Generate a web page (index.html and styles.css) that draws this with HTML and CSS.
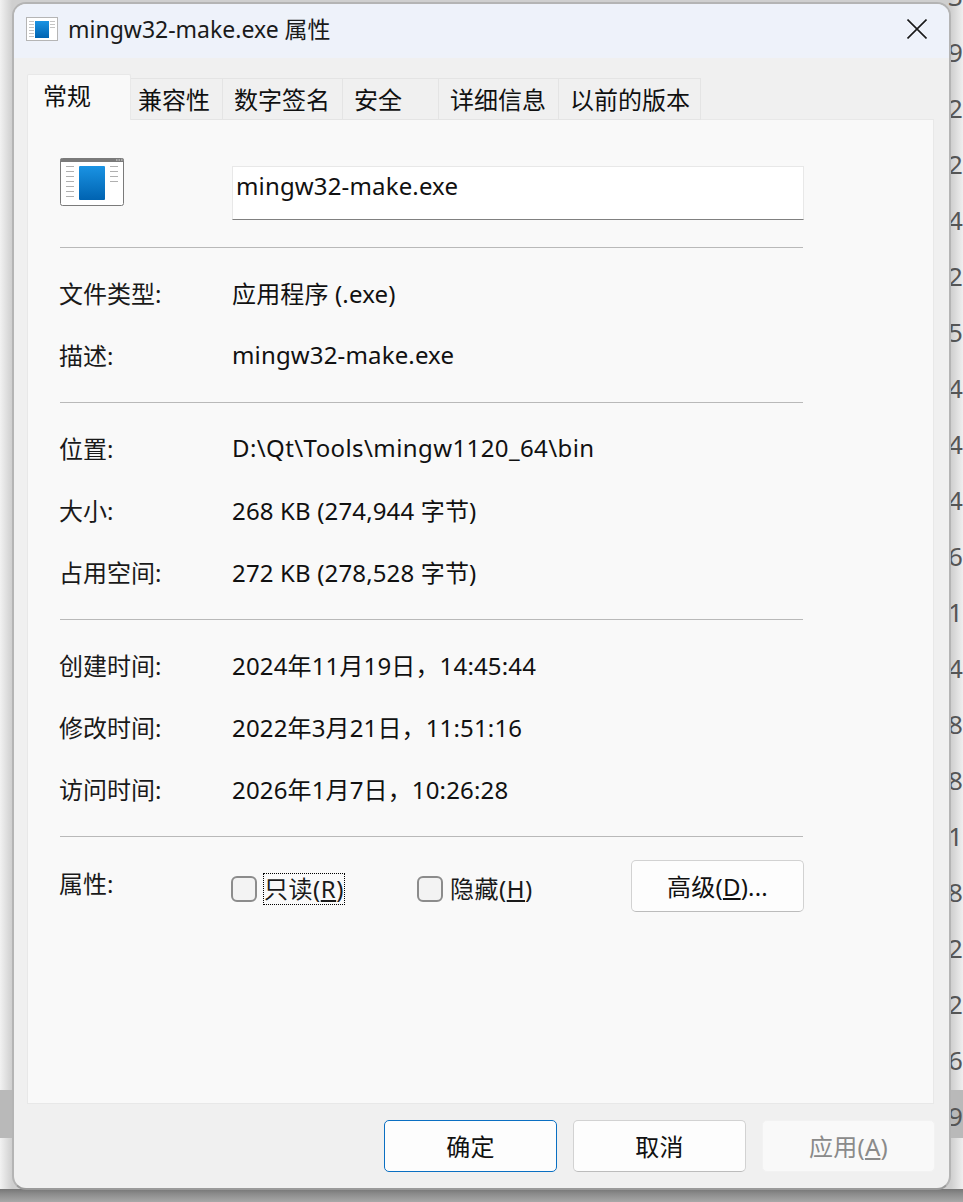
FILE: index.html
```html
<!DOCTYPE html>
<html lang="zh-CN">
<head>
<meta charset="utf-8">
<title>mingw32-make.exe 属性</title>
<link rel="stylesheet" href="styles.css">
</head>
<body>
<div class="desktop">
  <div class="bg-row"></div>
  <div class="bg-bottom"></div>
  <div class="bg-digits">
    <span>3</span><span>9</span><span>2</span><span>2</span><span>4</span><span>2</span><span>5</span><span>4</span><span>4</span><span>4</span><span>6</span><span>1</span><span>4</span><span>8</span><span>8</span><span>1</span><span>8</span><span>2</span><span>2</span><span>6</span><span>9</span>
  </div>
  <div class="window">
    <header class="titlebar">
      <svg class="title-icon" width="32" height="24" viewBox="0 0 32 24">
        <rect x="0.5" y="0.5" width="31" height="23" fill="#fff" stroke="#b5b5b5"/>
        <rect x="9" y="4" width="14" height="17" fill="url(#gt)"/>
        <g stroke="#c4c4c4"><path d="M3 4.5h5M3 7.5h5M3 10.5h5M3 13.5h5M3 16.5h5M3 19.5h5M24 4.5h5M24 7.5h5M24 10.5h5"/></g>
        <defs><linearGradient id="gt" x1="0" y1="0" x2="0" y2="1"><stop offset="0" stop-color="#1a93e3"/><stop offset="1" stop-color="#0063b1"/></linearGradient></defs>
      </svg>
      <span class="title-text">mingw32-make.exe 属性</span>
      <svg class="close" width="20" height="20" viewBox="0 0 20 20"><path d="M0.5 0.5L19.500 19.500M19.500 0.5L0.5 19.500" stroke="#1a1a1a" stroke-width="1.6" fill="none"/></svg>
    </header>
    <div class="body">
      <nav class="tabs">
        <div class="tab tab-active">常规</div>
        <div class="tab tab-1">兼容性</div>
        <div class="tab tab-2">数字签名</div>
        <div class="tab tab-3">安全</div>
        <div class="tab tab-4">详细信息</div>
        <div class="tab tab-5">以前的版本</div>
      </nav>
      <main class="panel">
        <div class="head-row">
          <svg class="file-icon" width="64" height="48" viewBox="0 0 64 48">
            <rect x="0.5" y="0.5" width="63" height="47" rx="2" fill="#fff" stroke="#7a7a7a"/>
            <rect x="0.5" y="0.5" width="63" height="3.5" fill="#7a7a7a"/>
            <path d="M56 2h1.500M58.500 2h1.500M61 2h1.500" stroke="#ddd" stroke-width="1"/>
            <rect x="19" y="8" width="26" height="34" rx="1" fill="url(#gf)"/>
            <g stroke="#b0b0b0" stroke-width="1"><path d="M6 8.500h8M6 13.500h8M6 18.500h8M6 23.500h8M6 28.500h8M6 33.500h8M6 38.500h8M50 8.500h8M50 13.500h8M50 18.500h8M50 23.500h8"/></g>
            <defs><linearGradient id="gf" x1="0" y1="0" x2="0" y2="1"><stop offset="0" stop-color="#1a93e3"/><stop offset="1" stop-color="#0063b1"/></linearGradient></defs>
          </svg>
          <div class="name-input">mingw32-make.exe</div>
        </div>
        <div class="sep"></div>
        <section class="rows">
          <div class="row"><span class="label">文件类型:</span><span class="value">应用程序 (.exe)</span></div>
          <div class="row"><span class="label">描述:</span><span class="value">mingw32-make.exe</span></div>
        </section>
        <div class="sep"></div>
        <section class="rows">
          <div class="row"><span class="label">位置:</span><span class="value value-path">D:\Qt\Tools\mingw1120_64\bin</span></div>
          <div class="row"><span class="label">大小:</span><span class="value">268 KB (274,944 字节)</span></div>
          <div class="row"><span class="label">占用空间:</span><span class="value">272 KB (278,528 字节)</span></div>
        </section>
        <div class="sep"></div>
        <section class="rows">
          <div class="row"><span class="label">创建时间:</span><span class="value">2024年11月19日，14:45:44</span></div>
          <div class="row"><span class="label">修改时间:</span><span class="value">2022年3月21日，11:51:16</span></div>
          <div class="row"><span class="label">访问时间:</span><span class="value">2026年1月7日，10:26:28</span></div>
        </section>
        <div class="sep"></div>
        <div class="attr-row">
          <span class="label attr-label">属性:</span>
          <div class="check-group">
            <span class="check"><i class="box"></i><span class="check-text focused">只读(<u>R</u>)</span></span>
            <span class="check"><i class="box"></i><span class="check-text">隐藏(<u>H</u>)</span></span>
          </div>
          <button class="btn btn-adv">高级(<u>D</u>)...</button>
        </div>
      </main>
      <footer class="footer">
        <button class="btn btn-primary">确定</button>
        <button class="btn">取消</button>
        <button class="btn btn-disabled">应用(<u>A</u>)</button>
      </footer>
    </div>
  </div>
</div>
</body>
</html>
```
FILE: styles.css
```css
* { box-sizing: border-box; }
html, body { margin: 0; padding: 0; }
body {
  width: 963px; height: 1202px; overflow: hidden;
  font-family: "Noto Sans", "Noto Sans CJK SC", sans-serif;
  font-size: 24px; color: #1a1a1a;
}
.desktop {
  position: relative; width: 963px; height: 1202px; overflow: hidden;
  background: linear-gradient(90deg, #f2f2f2 0, #cfcfcf 12px, #cfcfcf 951px, #efefef 963px);
}
.bg-row { position: absolute; left: 0; right: 0; top: 1090px; height: 48px; background: #b9b9b9; }
.bg-bottom { position: absolute; left: 0; right: 0; top: 1189px; height: 13px; background: linear-gradient(#767676, #8c8c8c 5px, #a8a8a8); }
.bg-digits { position: absolute; left: 948px; top: -32px; display: flex; flex-direction: column; color: #555; font-size: 26px; line-height: 56px; }
.window {
  position: absolute; left: 12px; top: 2px; width: 939px; height: 1188px;
  background: #f0f0f0; border-radius: 14px; overflow: hidden;
  border: 2px solid #b4b4b4; border-bottom-color: #9a9a9a;
  display: flex; flex-direction: column;
}
.titlebar {
  height: 54px; background: #eef2fa; display: flex; align-items: center;
  padding-left: 12px; flex: none; position: relative;
}
.title-icon { flex: none; margin-top: -4px; }
.title-text { margin-left: 10px; font-size: 23px; line-height: 30px; color: #1a1a1a; margin-top: -4px; }
.close { position: absolute; left: 893px; top: 15px; }
.body { flex: 1; display: flex; flex-direction: column; padding: 0 13px; min-height: 0; }
.tabs { display: flex; align-items: flex-end; height: 62px; flex: none; position: relative; z-index: 1; }
.tab {
  height: 42px; background: #f0f0f0; border: 1px solid #e4e4e4; border-left: 0;
  padding-left: 11px; line-height: 41px; font-size: 24px; color: #111;
}
.tab-active { width: 104px; height: 46px; background: #f9f9f9; border: 1px solid #e8e8e8; border-bottom: 0; border-radius: 2px 2px 0 0; padding-left: 15px; line-height: 41px; }
.tab-1 { width: 92px; padding-left: 7px; }
.tab-2 { width: 120px; }
.tab-3 { width: 96px; }
.tab-4 { width: 120px; }
.tab-5 { width: 142px; }
.panel {
  height: 985px; width: 907px; flex: none; background: #f9f9f9; border: 1px solid #e8e8e8; margin-top: -1px;
  padding: 38px 0 0 32px;
}
.head-row { display: flex; align-items: flex-start; height: 89px; }
.file-icon { flex: none; }
.name-input {
  margin-left: 108px; width: 572px; height: 54px; margin-top: 8px; background: #fff;
  border: 1px solid #e8e8e8; border-bottom: 1px solid #808080; padding: 0 0 0 3px; line-height: 38px; color: #111;
  letter-spacing: 0.15px;
}
.sep { width: 743px; height: 1px; background: #b9b9b9; }
.rows { padding: 15px 0; }
.row { display: flex; height: 62px; align-items: center; padding-bottom: 4px; }
.label { width: 173px; margin-left: -1px; flex: none; }
.value { color: #111; letter-spacing: 0.15px; }
.value-path { letter-spacing: 0.4px; }
.attr-row { display: flex; align-items: flex-start; margin-top: 23px; height: 54px; }
.attr-label { line-height: 48px; }
.check-group { display: flex; width: 399px; padding-top: 15px; }
.check { display: flex; align-items: center; width: 186px; height: 28px; }
.box { width: 26px; height: 26px; border: 2px solid #8c8c8c; border-radius: 6px; background: #f3f3f3; flex: none; margin-left: -1px; }
.check-text { margin-left: 7px; line-height: 30px; letter-spacing: 0.5px; }
.focused { outline: 1px dotted #000; }
.btn {
  width: 173px; height: 52px; padding: 0 0 2px; background: #fdfdfd; border: 1px solid #d2d2d2; border-bottom-color: #bcbcbc;
  border-radius: 5px; font: inherit; color: #111; letter-spacing: 0.2px;
}
.footer { display: flex; gap: 16px; justify-content: flex-end; padding: 16px 0 0; margin-right: 1px; }
.btn-primary { border: 1px solid #0a6fc2; }
.btn-disabled { background: #f9f9f9; border-color: #f2f2f2; color: #8a8a8a; }
```
